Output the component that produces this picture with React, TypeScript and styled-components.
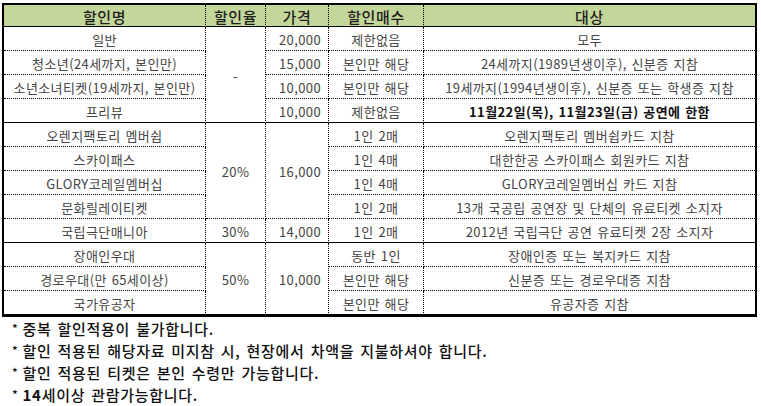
import React from "react";
import styled, { createGlobalStyle } from "styled-components";

const Global = createGlobalStyle`
  html, body { margin: 0; padding: 0; background: #ffffff; }
  body { font-family: "Noto Sans CJK KR", "Noto Sans", "Liberation Sans", sans-serif; }
`;

const Page = styled.div`
  display: flex;
  flex-direction: column;
  padding: 3px 0 0 2px;
  width: 755px;
`;

const Table = styled.div`
  display: grid;
  grid-template-columns: 202px 60px 63px 95px 331px;
  grid-template-rows: 22px repeat(12, 24px);
  border: 2px solid #000;
  width: 755px;
  box-sizing: border-box;
`;

type Edge = "dotted" | "solid";
type Align = "left" | "center" | "right";

const HeadCell = styled.div<{ $last?: boolean }>`
  box-sizing: border-box;
  background: #c4d79b;
  display: flex;
  align-items: center;
  justify-content: center;
  font-size: 15px;
  font-weight: 500;
  letter-spacing: 0.6px;
  color: #1e1e1e;
  border-bottom: 1px solid #000;
  border-right: ${(p) => (p.$last ? "none" : "1px dotted #000")};
  line-height: 1;
  padding-top: 1px;
`;

const Cell = styled.div<{
  $edge: Edge;
  $last?: boolean;
  $align?: Align;
  $span?: number;
  $strong?: boolean;
}>`
  box-sizing: border-box;
  display: flex;
  align-items: center;
  justify-content: ${(p) =>
    p.$align === "right" ? "flex-end" : p.$align === "left" ? "flex-start" : "center"};
  padding: ${(p) => (p.$align === "right" ? "0 7px 0 0" : "0")};
  grid-row: ${(p) => (p.$span ? `span ${p.$span}` : "auto")};
  border-bottom: 1px ${(p) => p.$edge} #000;
  border-right: ${(p) => (p.$last ? "none" : "1px dotted #000")};
  font-size: 13px;
  letter-spacing: 0.4px;
  word-spacing: 1.5px;
  font-weight: ${(p) => (p.$strong ? 700 : 400)};
  color: ${(p) => (p.$strong ? "#111" : "#444")};
  white-space: nowrap;
  line-height: 1;
  padding-top: 1px;
`;

const Notes = styled.div`
  display: flex;
  flex-direction: column;
  padding: 0 0 0 10px;
`;

const Note = styled.div`
  font-size: 15px;
  line-height: 22px;
  height: 22px;
  letter-spacing: 0.7px;
  word-spacing: 2px;
  color: #111;
  font-weight: 500;
  white-space: nowrap;
`;

const Star = styled.span`
  font-size: 12px;
  vertical-align: 2px;
  margin-right: 4px;
`;

const Em = styled.b`
  font-weight: 700;
`;

type RowData = {
  name: string;
  rate?: { text: string; span: number };
  price?: { text: string; span: number };
  count: string;
  target: string;
  strong?: boolean;
  end?: boolean;
};

const rows: RowData[] = [
  { name: "일반", rate: { text: "-", span: 4 }, price: { text: "20,000", span: 1 }, count: "제한없음", target: "모두" },
  { name: "청소년(24세까지, 본인만)", price: { text: "15,000", span: 1 }, count: "본인만 해당", target: "24세까지(1989년생이후), 신분증 지참" },
  { name: "소년소녀티켓(19세까지, 본인만)", price: { text: "10,000", span: 1 }, count: "본인만 해당", target: "19세까지(1994년생이후), 신분증 또는 학생증 지참" },
  { name: "프리뷰", price: { text: "10,000", span: 1 }, count: "제한없음", target: "11월22일(목), 11월23일(금) 공연에 한함", strong: true, end: true },
  { name: "오렌지팩토리 멤버쉽", rate: { text: "20%", span: 4 }, price: { text: "16,000", span: 4 }, count: "1인 2매", target: "오렌지팩토리 멤버쉽카드 지참" },
  { name: "스카이패스", count: "1인 4매", target: "대한한공 스카이패스 회원카드 지참" },
  { name: "GLORY코레일멤버십", count: "1인 4매", target: "GLORY코레일멤버십 카드 지참" },
  { name: "문화릴레이티켓", count: "1인 2매", target: "13개 국공립 공연장 및 단체의 유료티켓 소지자" },
  { name: "국립극단매니아", rate: { text: "30%", span: 1 }, price: { text: "14,000", span: 1 }, count: "1인 2매", target: "2012년 국립극단 공연 유료티켓 2장 소지자", end: true },
  { name: "장애인우대", rate: { text: "50%", span: 3 }, price: { text: "10,000", span: 3 }, count: "동반 1인", target: "장애인증 또는 복지카드 지참" },
  { name: "경로우대(만 65세이상)", count: "본인만 해당", target: "신분증 또는 경로우대증 지참" },
  { name: "국가유공자", count: "본인만 해당", target: "유공자증 지참", end: true },
];

const headers = ["할인명", "할인율", "가격", "할인매수", "대상"];

export default function App() {
  const cells: React.ReactNode[] = [];
  rows.forEach((r, i) => {
    const edge: Edge = r.end ? "solid" : "dotted";
    const spanEdge = (span: number): Edge => (rows[i + span - 1]?.end ? "solid" : "dotted");
    cells.push(
      <Cell key={`n${i}`} $edge={edge}>
        {r.name}
      </Cell>
    );
    if (r.rate) {
      cells.push(
        <Cell key={`r${i}`} $edge={spanEdge(r.rate.span)} $span={r.rate.span}>
          {r.rate.text}
        </Cell>
      );
    }
    if (r.price) {
      cells.push(
        <Cell key={`p${i}`} $edge={spanEdge(r.price.span)} $span={r.price.span} $align="right">
          {r.price.text}
        </Cell>
      );
    }
    cells.push(
      <Cell key={`c${i}`} $edge={edge}>
        {r.count}
      </Cell>
    );
    cells.push(
      <Cell key={`t${i}`} $edge={edge} $last $strong={r.strong}>
        {r.target}
      </Cell>
    );
  });

  return (
    <>
      <Global />
      <Page>
        <Table>
          {headers.map((h, i) => (
            <HeadCell key={h} $last={i === headers.length - 1}>
              {h}
            </HeadCell>
          ))}
          {cells}
        </Table>
        <Notes>
          <Note>
            <Star>*</Star>중복 할인적용이 불가합니다.
          </Note>
          <Note>
            <Star>*</Star>할인 적용된 해당자료 미지참 시, 현장에서 차액을 지불하셔야 합니다.
          </Note>
          <Note>
            <Star>*</Star>할인 적용된 티켓은 본인 수령만 가능합니다.
          </Note>
          <Note>
            <Star>*</Star>
            <Em>14</Em>세이상 관람가능합니다.
          </Note>
        </Notes>
      </Page>
    </>
  );
}
